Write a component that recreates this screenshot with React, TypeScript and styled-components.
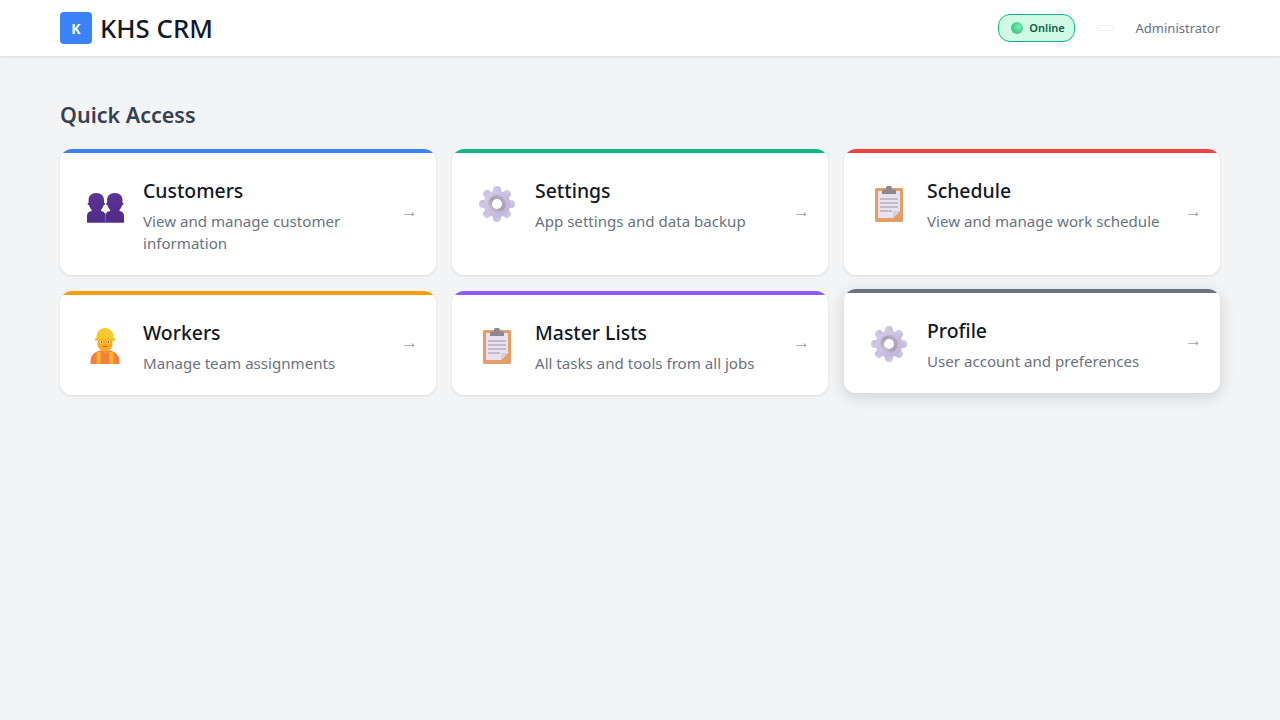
import React from 'react';
import styled, { createGlobalStyle } from 'styled-components';

const GlobalStyle = createGlobalStyle`
  * { box-sizing: border-box; }
  html, body { margin: 0; padding: 0; }
  body {
    background: #f3f4f6;
    font-family: 'Noto Sans', sans-serif;
    min-height: 720px;
  }
`;

const Header = styled.header`
  height: 56px;
  background: #ffffff;
  box-shadow: 0 1px 3px rgba(0, 0, 0, 0.1);
  padding: 0 60px;
  display: flex;
  align-items: center;
  justify-content: space-between;
`;

const Brand = styled.div`
  display: flex;
  align-items: center;
  gap: 8px;
`;

const LogoMark = styled.div`
  width: 32px;
  height: 32px;
  border-radius: 4px;
  background: #3b82f6;
  color: #ffffff;
  font-size: 14px;
  font-weight: 700;
  display: flex;
  align-items: center;
  justify-content: center;
`;

const BrandName = styled.div`
  font-size: 25.800px;
  line-height: 32px;
  font-weight: 500;
  color: #111827;
`;

const HeaderRight = styled.div`
  display: flex;
  align-items: center;
`;

const StatusPill = styled.div`
  height: 28px;
  width: 77px;
  padding-left: 4px;
  border: 1px solid #10b981;
  border-radius: 12px;
  background: #d1fae5;
  display: flex;
  align-items: center;
  justify-content: center;
  gap: 6px;
`;

const StatusLabel = styled.span`
  margin-top: -2px;
  color: #065f46;
  font-size: 11px;
  font-weight: 600;
`;

const StatusDot = styled.span`
  width: 12px;
  height: 12px;
  border-radius: 50%;
  background: radial-gradient(circle at 65% 40%, #7cf0b0, #45cf8c 55%, #7d9f90);
`;

const EmptyBadge = styled.div`
  width: 18px;
  height: 6px;
  margin-left: 22px;
  margin-right: 21px;
  border: 1px solid #f0f1f3;
  border-radius: 3px;
`;

const UserName = styled.div`
  font-size: 13px;
  line-height: 18px;
  margin-top: -1px;
  color: #6b7280;
`;

const Main = styled.main`
  padding: 40px 60px;
`;

const SectionTitle = styled.h2`
  margin: 0 0 16px;
  font-size: 21.500px;
  line-height: 37px;
  font-weight: 600;
  color: #374151;
`;

const CardGrid = styled.div`
  display: grid;
  grid-template-columns: repeat(3, 1fr);
  gap: 16px;
`;

const Card = styled.div<{ $accent: string; $hovered?: boolean }>`
  position: relative;
  overflow: hidden;
  display: flex;
  align-items: center;
  background: #ffffff;
  border-radius: 12px;
  padding: 24px 18px 21px 24px;
  box-shadow: ${(p) =>
    p.$hovered
      ? '0 4px 16px rgba(0, 0, 0, 0.15)'
      : '0 1px 3px rgba(0, 0, 0, 0.1)'};
  transform: ${(p) => (p.$hovered ? 'translateY(-2px)' : 'none')};

  &::before {
    content: '';
    position: absolute;
    top: 0;
    left: 0;
    right: 0;
    height: 4px;
    background: ${(p) => p.$accent};
  }
`;

const IconSlot = styled.div`
  flex: none;
  align-self: flex-start;
  width: 42px;
  height: 57px;
  padding-top: 13px;
  margin-right: 17px;
  display: flex;
  align-items: flex-start;
  justify-content: center;
`;

const CardBody = styled.div`
  flex: 1;
  min-width: 0;
  align-self: flex-start;
  padding-top: 4px;
`;

const CardTitle = styled.div`
  font-size: 19.400px;
  line-height: 27px;
  font-weight: 500;
  color: #111827;
  margin-bottom: 6px;
`;

const CardText = styled.div`
  font-size: 15.100px;
  line-height: 22px;
  color: #6b7280;
`;

const Arrow = styled.div`
  flex: none;
  margin-left: 16px;
  margin-bottom: 6px;
  font-size: 17px;
  color: #9ca3af;
`;

const PeopleIcon = () => (
  <svg width="36" height="36" viewBox="0 0 36 36" style={{ overflow: 'visible' }}>
    <defs>
      <linearGradient id="bust" x1="0" y1="0" x2="0" y2="1">
        <stop offset="0" stopColor="#5c3596" />
        <stop offset="1" stopColor="#4f2a86" />
      </linearGradient>
    </defs>
    {[0, 18.500].map((dx) => (
      <path
        key={dx}
        transform={`translate(${dx} 0)`}
        fill="url(#bust)"
        d="M9.300 7C14.300 7 17 10 17 14V16.800C17.800 16.900 18.100 17.400 18 18C17.800 18.700 17.300 19.100 16.600 19.200C16 21.200 15 22.900 14 24V25C16.800 25.400 18.500 27 18.500 30V36.500H0V30C0 27 1.800 25.400 4.600 25V24C3.600 22.900 2.600 21.200 2 19.200C1.300 19.100 .8 18.700 .6 18C.5 17.400 .8 16.900 1.600 16.800V14C1.600 10 4.300 7 9.300 7Z"
      />
    ))}
    <path d="M18.300 27v9.500" stroke="#7a52b3" strokeWidth="0.600" />
    <path d="M0 36.500h37" stroke="#7d5bb8" strokeWidth="0.800" />
  </svg>
);

const GearIcon = ({ id }: { id: string }) => {
  const teeth = [0, 45, 90, 135, 180, 225, 270, 315];
  return (
    <svg width="36" height="36" viewBox="0 0 36 36">
      <defs>
        <linearGradient id={id} x1="0" y1="1" x2="1" y2="0">
          <stop offset="0" stopColor="#d8d2e2" />
          <stop offset="0.5" stopColor="#a5a0b0" />
          <stop offset="1" stopColor="#bdb7c8" />
        </linearGradient>
        <linearGradient id={`${id}-body`} x1="0" y1="0" x2="1" y2="1">
          <stop offset="0" stopColor="#d6cdea" />
          <stop offset="1" stopColor="#bfb2da" />
        </linearGradient>
      </defs>
      <g fill={`url(#${id}-body)`}>
        {teeth.map((a) => (
          <rect key={a} x="14" y="0" width="8" height="12" rx="3.800" transform={`rotate(${a} 18 18)`} />
        ))}
        <circle cx="18" cy="18" r="13.500" />
      </g>
      <circle cx="18" cy="18" r="9" fill={`url(#${id})`} />
      <circle cx="18" cy="18" r="5" fill="#ffffff" />
    </svg>
  );
};

const ClipboardIcon = () => (
  <svg width="36" height="36" viewBox="0 0 36 36">
    <rect x="4" y="2" width="28" height="34" rx="1.500" fill="#e39f66" />
    <path d="M7 5h22v20l-7 7H7z" fill="#e8e2f0" />
    <path d="M22 32l7-7h-5.500c-.8 0-1.500.7-1.500 1.500z" fill="#d6cedd" />
    <path d="M11 8V5c0-.7.500-1.500 1.500-1.500H15V2c0-1.200.800-2 1.800-2h2.400c1 0 1.800.8 1.800 2v1.500h2.500c1 0 1.500.8 1.500 1.500v3z" fill="#8d8590" />
    <path d="M9 13h18M9 17h18M9 21h18" stroke="#9a94a4" strokeWidth="1.200" />
    <path d="M9 25h12" stroke="#9a94a4" strokeWidth="1.200" />
  </svg>
);

const WorkerIcon = () => (
  <svg width="36" height="36" viewBox="0 0 36 36">
    <path d="M3.500 36v-3c0-6.500 5.500-11 14.500-11s14.500 4.500 14.500 11v3z" fill="#f4803f" />
    <path d="M9.700 24h4V36h-4zM22.300 24h4V36h-4z" fill="#f9b233" />
    <path d="M15.500 19h5v5c0 1.400-5 1.400-5 0z" fill="#f29a1f" />
    <path d="M10.500 10h15v6.500c0 3.800-3.300 6.500-7.500 6.500s-7.500-2.700-7.500-6.500z" fill="#f9ac1e" />
    <circle cx="14.300" cy="14" r="1.500" fill="#fff3d6" />
    <circle cx="21.700" cy="14" r="1.500" fill="#fff3d6" />
    <circle cx="14.400" cy="14.100" r="0.800" fill="#5a3a2a" />
    <circle cx="21.600" cy="14.100" r="0.800" fill="#5a3a2a" />
    <path d="M15.800 18.500h4.400" stroke="#c9502f" strokeWidth="1.200" />
    <path d="M9.500 10.500V9c0-5.500 3.700-9 8.500-9s8.500 3.500 8.500 9v1.500z" fill="#f8c92e" />
    <path d="M7.500 12.500c0-1.200.700-2.500 2-2.500h17c1.300 0 2 1.300 2 2.500z" fill="#f5bd27" />
  </svg>
);

const cards = [
  { title: 'Customers', text: 'View and manage customer information', accent: '#3b82f6', icon: <PeopleIcon /> },
  { title: 'Settings', text: 'App settings and data backup', accent: '#10b981', icon: <GearIcon id="gear-a" /> },
  { title: 'Schedule', text: 'View and manage work schedule', accent: '#ef4444', icon: <ClipboardIcon /> },
  { title: 'Workers', text: 'Manage team assignments', accent: '#f59e0b', icon: <WorkerIcon /> },
  { title: 'Master Lists', text: 'All tasks and tools from all jobs', accent: '#8b5cf6', icon: <ClipboardIcon /> },
  { title: 'Profile', text: 'User account and preferences', accent: '#6b7280', icon: <GearIcon id="gear-b" />, hovered: true },
];

export default function App() {
  return (
    <>
      <GlobalStyle />
      <Header>
        <Brand>
          <LogoMark>K</LogoMark>
          <BrandName>KHS CRM</BrandName>
        </Brand>
        <HeaderRight>
          <StatusPill>
            <StatusDot />
            <StatusLabel>Online</StatusLabel>
          </StatusPill>
          <EmptyBadge />
          <UserName>Administrator</UserName>
        </HeaderRight>
      </Header>
      <Main>
        <SectionTitle>Quick Access</SectionTitle>
        <CardGrid>
          {cards.map((c) => (
            <Card key={c.title} $accent={c.accent} $hovered={c.hovered}>
              <IconSlot>{c.icon}</IconSlot>
              <CardBody>
                <CardTitle>{c.title}</CardTitle>
                <CardText>{c.text}</CardText>
              </CardBody>
              <Arrow>→</Arrow>
            </Card>
          ))}
        </CardGrid>
      </Main>
    </>
  );
}
